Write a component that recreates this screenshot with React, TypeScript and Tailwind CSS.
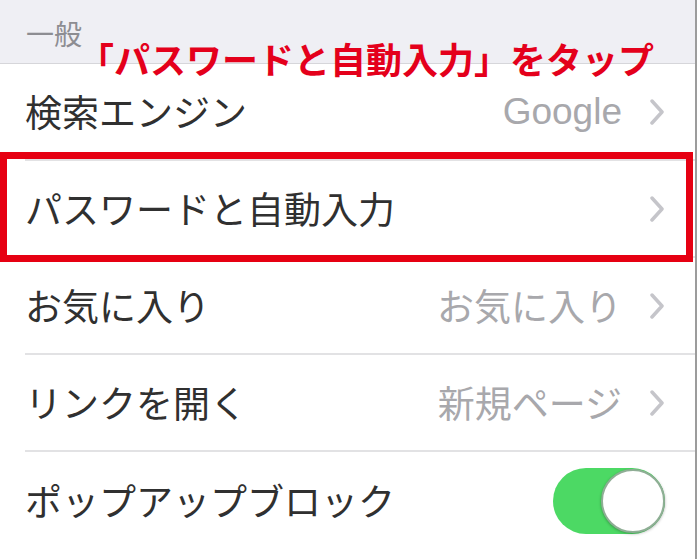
import { FC } from "react";

const jp = { fontFamily: '"Noto Sans CJK JP", "Noto Sans", sans-serif' };

const Chevron: FC = () => (
  <svg width="16" height="26" viewBox="0 0 16 26" className="shrink-0">
    <path d="M3 2 L13 13 L3 24" fill="none" stroke="#c5c5ca" strokeWidth="3.5" strokeLinecap="round" strokeLinejoin="round" />
  </svg>
);

const Toggle: FC = () => (
  <div className="w-[112px] h-[66px] rounded-full bg-[#4cd964] flex items-center justify-end">
    <div className="w-[64px] h-[64px] rounded-full bg-white border-2 border-[#8fae95] shadow-[0_1px_3px_rgba(0,0,0,0.3)]" />
  </div>
);

type RowProps = {
  label: string;
  value?: string;
  latin?: boolean;
  toggle?: boolean;
  last?: boolean;
};

const Row: FC<RowProps> = ({ label, value, latin, toggle, last }) => (
  <div className="h-[97px] pl-[25px] flex">
    <div className={`flex-1 flex items-center pr-[30px] ${last ? "" : "border-b-2 border-[#e2e2e4]"}`}>
      <span className="flex-1 text-[37px] leading-none text-[#303030]">{label}</span>
      {value && (
        <span
          className="text-[37px] leading-none text-[#a8a8ac] mr-[27px]"
          style={latin ? { fontFamily: '"Liberation Sans", Arial, sans-serif', fontSize: 37 } : undefined}
        >
          {value}
        </span>
      )}
      {toggle ? <Toggle /> : <Chevron />}
    </div>
  </div>
);

export default function App() {
  return (
    <div className="w-[700px] h-[559px] overflow-hidden bg-white flex" style={jp}>
      <div className="relative w-[697px] border-r-2 border-[#9c9c9c] flex flex-col">
        <div className="h-[64px] bg-[#efeff4] border-b border-[#d6d6da] pl-[26px] pt-[19px]">
          <span className="text-[28px] leading-none text-[#8d8d92]">一般</span>
        </div>
        <Row label="検索エンジン" value="Google" latin />
        <Row label="パスワードと自動入力" />
        <Row label="お気に入り" value="お気に入り" />
        <Row label="リンクを開く" value="新規ページ" />
        <Row label="ポップアップブロック" toggle last />

        <div className="absolute left-0 top-[152px] w-[693px] h-[110px] border-[7px] border-[#e60012]" />
        <div className="absolute left-[78px] top-[40px] text-[36px] leading-none font-bold text-[#e4001b] whitespace-nowrap">
          「パスワードと自動入力」をタップ
        </div>
      </div>
    </div>
  );
}
